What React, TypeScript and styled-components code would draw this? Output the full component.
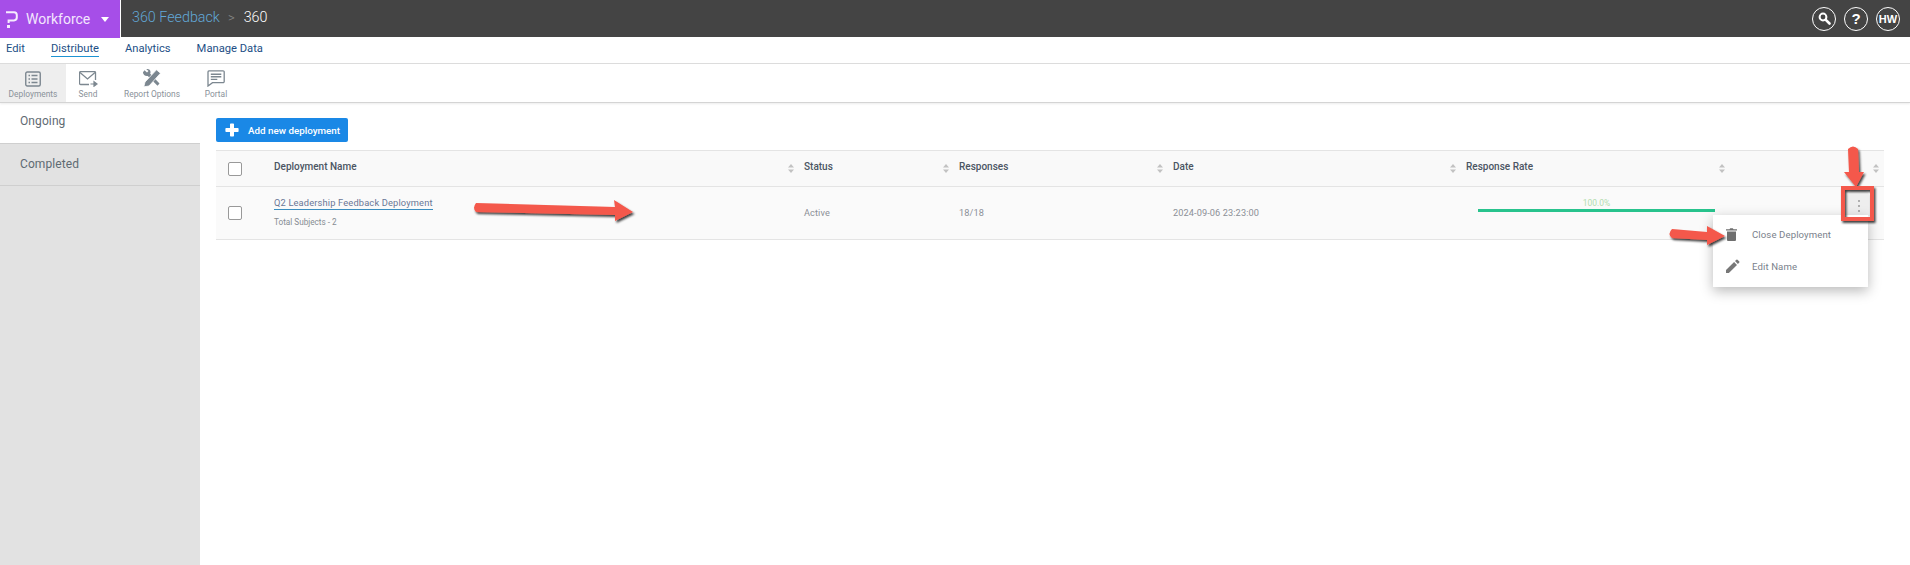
import React from "react";
import styled, { createGlobalStyle } from "styled-components";

const Global = createGlobalStyle`
  html, body { margin: 0; padding: 0; background: #fff; }
  body { font-family: "Roboto", "Noto Sans", sans-serif; overflow: hidden; }
  * { box-sizing: border-box; }
`;

const Page = styled.div`
  position: relative;
  width: 1910px;
  height: 565px;
  display: flex;
  flex-direction: column;
  overflow: hidden;
`;

const TopBar = styled.header`
  height: 37px;
  background: #444444;
  display: flex;
  align-items: center;
  flex: none;
`;

const Brand = styled.div`
  width: 121px;
  height: 38px;
  flex: none;
  align-self: flex-start;
  background: #a64ee8;
  color: #f3e6fd;
  display: flex;
  align-items: center;
  padding-left: 5px;
  font-size: 14px;
  border-right: 1px solid #fff;
  position: relative;
  z-index: 1;
`;

const BrandName = styled.span`
  margin-left: 8px;
`;

const Caret = styled.span`
  margin-left: 11px;
  width: 0;
  height: 0;
  border-left: 4.5px solid transparent;
  border-right: 4.5px solid transparent;
  border-top: 5px solid #fff;
`;

const Crumbs = styled.div`
  margin-left: 11px;
  font-size: 14.3px;
  font-weight: 300;
  display: flex;
  align-items: center;
  color: #fff;
  margin-top: -3px;
`;

const CrumbLink = styled.span`
  color: #62a8d8;
`;

const CrumbSep = styled.span`
  color: #888;
  margin: 0 9px 0 8px;
  font-size: 13px;
`;

const TopActions = styled.div`
  margin-left: auto;
  display: flex;
  align-items: center;
  gap: 8px;
  padding-right: 10px;
`;

const RoundAction = styled.div<{ $large?: boolean }>`
  width: 24px;
  height: 24px;
  border: 1px solid #fff;
  border-radius: 50%;
  color: #fff;
  display: flex;
  align-items: center;
  justify-content: center;
  font-size: ${(p) => (p.$large ? 15 : 11)}px;
  font-weight: 900;
  font-family: "Liberation Sans", sans-serif;
`;

const NavBar = styled.nav`
  height: 27px;
  flex: none;
  display: flex;
  align-items: center;
  padding: 0 0 3px 6px;
  gap: 26px;
  border-bottom: 1px solid #dddddd;
  font-size: 11.2px;
`;

const NavItem = styled.a<{ $active?: boolean }>`
  color: #1d4f86;
  line-height: 15px;
  border-bottom: 1px solid ${(p) => (p.$active ? "#1d93d2" : "transparent")};
`;

const ToolBar = styled.div`
  height: 39px;
  flex: none;
  display: flex;
  border-bottom: 1px solid #d4d4d4;
  box-shadow: 0 1px 2px rgba(0, 0, 0, 0.08);
  position: relative;
  z-index: 1;
`;

const Tool = styled.div<{ $active?: boolean; $w: number }>`
  width: ${(p) => p.$w}px;
  background: ${(p) => (p.$active ? "#eeeeee" : "#fff")};
  display: flex;
  flex-direction: column;
  align-items: center;
  color: #8a929a;
  font-size: 8.4px;
`;

const ToolGlyph = styled.div`
  height: 24px;
  display: flex;
  align-items: flex-end;
  padding-bottom: 1px;
`;

const ToolLabel = styled.span`
  line-height: 12px;
  white-space: nowrap;
`;

const Body = styled.div`
  flex: 1;
  display: flex;
  min-height: 0;
`;

const Sidebar = styled.aside`
  width: 200px;
  flex: none;
  background: #e2e2e2;
`;

const SideItem = styled.div<{ $active?: boolean }>`
  height: ${(p) => (p.$active ? 41 : 42)}px;
  padding: 0 0 ${(p) => (p.$active ? 4 : 2)}px 20px;
  display: flex;
  align-items: center;
  background: ${(p) => (p.$active ? "#fff" : "#e2e2e2")};
  border-bottom: 1px solid #cfcfcf;
  color: #5f6b73;
  font-size: 12px;
  letter-spacing: 0.1px;
`;

const Main = styled.main`
  flex: 1;
  padding: 15px 26px 0 16px;
  min-width: 0;
`;

const AddButton = styled.button`
  width: 132px;
  height: 24px;
  background: #1a88e6;
  border: 0;
  border-radius: 2px;
  display: flex;
  align-items: center;
  padding: 0 0 0 9px;
  color: #fff;
  font: 500 9.8px "Roboto", sans-serif;
  white-space: nowrap;
  gap: 9px;
  margin-bottom: 8px;
`;

const Row = styled.div<{ $head?: boolean }>`
  display: grid;
  grid-template-columns: 58px 530px 155px 214px 293px 269px 149px;
  background: ${(p) => (p.$head ? "#f9f9f9" : "#fafafa")};
  border-bottom: 1px solid #e4e4e4;
  ${(p) => (p.$head ? "border-top: 1px solid #e4e4e4;" : "")}
  height: ${(p) => (p.$head ? 37 : 53)}px;
  align-items: center;
`;

const Cell = styled.div`
  display: flex;
  align-items: center;
  justify-content: space-between;
  min-width: 0;
  height: 100%;
  padding-right: 10px;
  &:last-child {
    padding-right: 5px;
  }
`;

const HeadText = styled.span`
  font-size: 10px;
  font-weight: 500;
  color: #4b5563;
  margin-top: -4px;
`;

const Sort = styled.svg`
  width: 6px;
  height: 9px;
  flex: none;
  margin-left: auto;
`;

const Box = styled.span`
  display: block;
  width: 14px;
  height: 14px;
  margin-left: 12px;
  background: #fff;
  border: 1px solid #999;
  border-radius: 2px;
`;

const DataText = styled.span`
  font-size: 9.2px;
  color: #8b8f96;
  letter-spacing: 0.1px;
  white-space: nowrap;
  margin-top: -2px;
`;

const NameCell = styled.div`
  display: flex;
  flex-direction: column;
  align-items: flex-start;
  gap: 7px;
  margin-top: -2px;
`;

const NameLink = styled.a`
  font-size: 9.3px;
  color: #6a7796;
  letter-spacing: 0.15px;
  line-height: 12px;
  border-bottom: 1px solid #3a8dc0;
`;

const SubText = styled.span`
  font-size: 8.2px;
  line-height: 11px;
  color: #868c92;
`;

const RateWrap = styled.div`
  margin-left: 12px;
  width: 237px;
  display: flex;
  flex-direction: column;
  align-items: center;
  margin-top: -16px;
`;

const RateText = styled.span`
  font-size: 8.5px;
  line-height: 11px;
  color: #b3dcae;
`;

const RateBar = styled.div`
  width: 100%;
  height: 3px;
  background: #28c38d;
`;

const Menu = styled.div`
  position: absolute;
  left: 1713px;
  top: 215px;
  width: 155px;
  height: 72px;
  background: #fff;
  padding-top: 3px;
  box-shadow: 0 4px 12px rgba(0, 0, 0, 0.28);
  z-index: 2;
`;

const MenuItem = styled.div`
  height: 32px;
  display: flex;
  align-items: center;
  font-size: 9.6px;
  letter-spacing: 0.1px;
  color: #7a818c;
`;

const MenuIcon = styled.span`
  width: 39px;
  padding-left: 13px;
  display: flex;
  flex: none;
`;

const Kebab = styled.div`
  position: absolute;
  left: 1847px;
  top: 190px;
  width: 23px;
  height: 26px;
  border-radius: 8px 8px 0 0;
  background: #eeeeee;
  display: flex;
  flex-direction: column;
  align-items: center;
  justify-content: center;
  gap: 3px;
  padding-top: 6px;
  z-index: 2;
`;

const Dot = styled.i`
  width: 2px;
  height: 2px;
  border-radius: 50%;
  background: #9a9a9a;
`;

const Overlay = styled.svg`
  position: absolute;
  inset: 0;
  width: 1910px;
  height: 565px;
  pointer-events: none;
  z-index: 3;
`;

const SortIcon = () => (
  <Sort viewBox="0 0 6 9">
    <path d="M3 0L6 3.4H0Z M3 9L0 5.6H6Z" fill="#c2c2c2" />
  </Sort>
);

const IconDeployments = () => (
  <svg width="16" height="16" viewBox="0 0 16 16" fill="none">
    <rect x="0.75" y="1" width="14.5" height="14" rx="1.5" stroke="#7c8790" strokeWidth="1.4" />
    <path d="M3.5 4.5h1.5M3.5 8h1.5M3.5 11.5h1.5M6.5 4.5h6M6.5 8h6M6.5 11.5h6" stroke="#7c8790" strokeWidth="1.5" />
  </svg>
);

const IconSend = () => (
  <svg width="19" height="16" viewBox="0 0 19 16" fill="none">
    <path d="M10 13.5H1.5a1 1 0 0 1-1-1V1.6a1 1 0 0 1 1-1h14a1 1 0 0 1 1 1V9" stroke="#7c8790" strokeWidth="1.3" />
    <path d="M1 1.5l7.5 6.5L16 1.5" stroke="#7c8790" strokeWidth="1.3" />
    <path d="M11.5 13h5M15 10.8l3 2.2-3 2.2z" stroke="#7c8790" strokeWidth="1.2" fill="#7c8790" />
  </svg>
);

const IconTools = () => (
  <svg width="20" height="18" viewBox="0 0 20 18" fill="none">
    <path d="M2.5 1.2L5 3.4 6.5 2 4.3.3C6.5-.4 8.8 1 8.5 3.5L8.2 4.8 17.5 14.5 15.5 16.8 5.8 7C3.2 7.6.8 5.4 1 3.2z" fill="#7c8790" />
    <path d="M14.5.8l4 3.4L7 17 1.8 17.8 3 13z" fill="#7c8790" stroke="#fff" strokeWidth=".8" />
  </svg>
);

const IconPortal = () => (
  <svg width="18" height="17" viewBox="0 0 18 17" fill="none">
    <path d="M2 .8h14a1.2 1.2 0 0 1 1.2 1.2v9.5a1.2 1.2 0 0 1-1.2 1.2H5.5L1 16V2A1.2 1.2 0 0 1 2 .8z" stroke="#7c8790" strokeWidth="1.3" />
    <path d="M3.8 4.2h10.5M3.8 6.8h10.5M3.8 9.4h6.5" stroke="#7c8790" strokeWidth="1.4" />
  </svg>
);

const LogoP = () => (
  <svg width="13" height="17" viewBox="0 0 13 17" fill="none">
    <path d="M1 1.2H9a2.8 2.8 0 0 1 2.8 2.8V6.6a2.8 2.8 0 0 1-2.8 2.8H3.6V12" stroke="#f6ecfe" strokeWidth="2" />
    <rect x="2" y="14" width="3" height="3" fill="#f6ecfe" />
  </svg>
);

const SearchGlyph = () => (
  <svg width="13" height="13" viewBox="0 0 13 13" fill="none">
    <circle cx="5" cy="5" r="3.4" stroke="#fff" strokeWidth="2" />
    <path d="M7.8 7.8L11.5 11.5" stroke="#fff" strokeWidth="2.6" strokeLinecap="round" />
  </svg>
);

const Plus = () => (
  <svg width="14" height="14" viewBox="0 0 14 14">
    <path d="M5 1.2a.8.8 0 0 1 .8-.8h2.4a.8.8 0 0 1 .8.8V5h3.8a.8.8 0 0 1 .8.8v2.4a.8.8 0 0 1-.8.8H9v3.8a.8.8 0 0 1-.8.8H5.8a.8.8 0 0 1-.8-.8V9H1.2a.8.8 0 0 1-.8-.8V5.8a.8.8 0 0 1 .8-.8H5z" fill="#fff" />
  </svg>
);

const Trash = () => (
  <svg width="11" height="13" viewBox="0 0 11 13">
    <path d="M1 3.4h9V12a1 1 0 0 1-1 1H2a1 1 0 0 1-1-1z M0 1.3h3.5L4.2.3h2.6l.7 1H11v1.3H0z" fill="#6f6f6f" />
  </svg>
);

const Pencil = () => (
  <svg width="14" height="14" viewBox="0 0 14 14">
    <path d="M0 11.1V14h2.9L11 5.900 8.100 3z M13.3 3.600a.8.8 0 0 0 0-1.100L11.500.7a.8.8 0 0 0-1.100 0L9 2.100 11.900 5z" fill="#777" />
  </svg>
);

const red = "#f4594b";

const Annotations = () => (
  <Overlay viewBox="0 0 1910 565">
    <defs>
      <filter id="arrowShade" x="-20%" y="-20%" width="140%" height="140%">
        <feDropShadow dx="1.5" dy="2" stdDeviation="1" floodColor="#000" floodOpacity="0.75" />
      </filter>
    </defs>
    <g filter="url(#arrowShade)" fill={red}>
      <path d="M476 203L615 207L614 200L633 212L615 221L615 215L476 212Q472 208 476 203Z" />
      <path d="M1848 149Q1853 144 1858 149L1859 172L1864 172L1856 187L1844 172L1849 172Z" />
      <path d="M1672 229L1707 232L1707 226L1725 236L1707 245L1707 240L1672 238Q1667 234 1672 229Z" />
      <rect x="1843" y="188" width="29" height="31" fill="none" stroke={red} strokeWidth="4" />
    </g>
  </Overlay>
);

const columns = ["Deployment Name", "Status", "Responses", "Date", "Response Rate", ""];

export default function App() {
  return (
    <Page>
      <Global />
      <TopBar>
        <Brand>
          <LogoP />
          <BrandName>Workforce</BrandName>
          <Caret />
        </Brand>
        <Crumbs>
          <CrumbLink>360 Feedback</CrumbLink>
          <CrumbSep>&gt;</CrumbSep>
          360
        </Crumbs>
        <TopActions>
          <RoundAction><SearchGlyph /></RoundAction>
          <RoundAction $large>?</RoundAction>
          <RoundAction>HW</RoundAction>
        </TopActions>
      </TopBar>
      <NavBar>
        <NavItem>Edit</NavItem>
        <NavItem $active>Distribute</NavItem>
        <NavItem>Analytics</NavItem>
        <NavItem>Manage Data</NavItem>
      </NavBar>
      <ToolBar>
        <Tool $active $w={66}><ToolGlyph><IconDeployments /></ToolGlyph><ToolLabel>Deployments</ToolLabel></Tool>
        <Tool $w={44}><ToolGlyph><IconSend /></ToolGlyph><ToolLabel>Send</ToolLabel></Tool>
        <Tool $w={84}><ToolGlyph><IconTools /></ToolGlyph><ToolLabel>Report Options</ToolLabel></Tool>
        <Tool $w={44}><ToolGlyph><IconPortal /></ToolGlyph><ToolLabel>Portal</ToolLabel></Tool>
      </ToolBar>
      <Body>
        <Sidebar>
          <SideItem $active>Ongoing</SideItem>
          <SideItem>Completed</SideItem>
        </Sidebar>
        <Main>
          <AddButton><Plus />Add new deployment</AddButton>
          <Row $head>
            <Cell><Box /></Cell>
            {columns.map((c) => (
              <Cell key={c}>
                {c && <HeadText>{c}</HeadText>}
                <SortIcon />
              </Cell>
            ))}
          </Row>
          <Row>
            <Cell><Box /></Cell>
            <Cell>
              <NameCell>
                <NameLink>Q2 Leadership Feedback Deployment</NameLink>
                <SubText>Total Subjects - 2</SubText>
              </NameCell>
            </Cell>
            <Cell><DataText>Active</DataText></Cell>
            <Cell><DataText>18/18</DataText></Cell>
            <Cell><DataText>2024-09-06 23:23:00</DataText></Cell>
            <Cell>
              <RateWrap>
                <RateText>100.0%</RateText>
                <RateBar />
              </RateWrap>
            </Cell>
            <Cell />
          </Row>
        </Main>
      </Body>
      <Kebab><Dot /><Dot /><Dot /></Kebab>
      <Menu>
        <MenuItem><MenuIcon><Trash /></MenuIcon>Close Deployment</MenuItem>
        <MenuItem><MenuIcon><Pencil /></MenuIcon>Edit Name</MenuItem>
      </Menu>
      <Annotations />
    </Page>
  );
}
